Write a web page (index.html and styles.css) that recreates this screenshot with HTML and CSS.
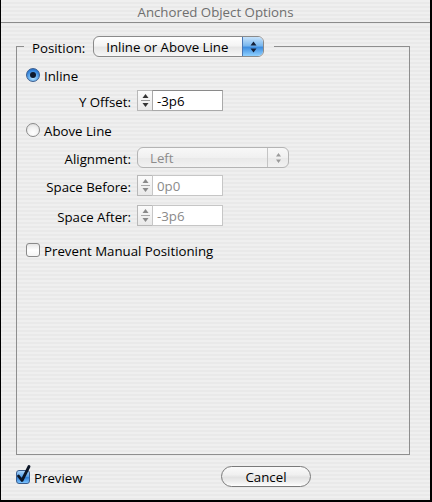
FILE: index.html
```html
<!DOCTYPE html>
<html>
<head>
<meta charset="utf-8">
<title>Anchored Object Options</title>
<link rel="stylesheet" href="styles.css">
</head>
<body>
<div class="window">
  <div class="titlebar">Anchored Object Options</div>
  <div class="content">
    <fieldset class="group">
      <legend class="group-legend">
        <span class="legend-label txt">Position:</span>
        <span class="popup popup-active">
          <span class="popup-text">Inline or Above Line</span>
          <span class="popup-arrows">
            <svg width="7" height="12" viewBox="0 0 7 12"><path d="M3.5 0.5 L6.5 4.5 H0.5Z M0.5 7.5 H6.5 L3.5 11.5Z" fill="#142038"/></svg>
          </span>
        </span>
      </legend>

      <div class="row row-inline">
        <span class="radio radio-on"><span class="radio-dot"></span></span>
        <span class="txt">Inline</span>
      </div>

      <div class="field-row row-yoffset">
        <span class="field-label txt">Y Offset:</span>
        <span class="stepper">
          <svg width="13" height="19" viewBox="0 0 13 19"><path d="M6.5 3 L9.5 7 H3.5Z" fill="#333"/><path d="M2 9.5 H11" stroke="#999" stroke-width="1"/><path d="M3.5 12 H9.5 L6.5 16Z" fill="#333"/></svg>
        </span>
        <span class="input">-3p6</span>
      </div>

      <div class="row row-above">
        <span class="radio radio-off"></span>
        <span class="txt">Above Line</span>
      </div>

      <div class="field-row row-align">
        <span class="field-label txt">Alignment:</span>
        <span class="popup popup-disabled">
          <span class="popup-text">Left</span>
          <span class="popup-arrows-dis">
            <svg width="7" height="12" viewBox="0 0 7 12"><path d="M3.5 1 L6 4.5 H1Z M1 7.5 H6 L3.5 11Z" fill="#9a9a9a"/></svg>
          </span>
        </span>
      </div>

      <div class="field-row row-before">
        <span class="field-label txt">Space Before:</span>
        <span class="stepper stepper-dis">
          <svg width="13" height="19" viewBox="0 0 13 19"><path d="M6.5 3 L9.5 7 H3.5Z" fill="#8a8a8a"/><path d="M2 9.5 H11" stroke="#aaa" stroke-width="1"/><path d="M3.5 12 H9.5 L6.5 16Z" fill="#8a8a8a"/></svg>
        </span>
        <span class="input input-dis">0p0</span>
      </div>

      <div class="field-row row-after">
        <span class="field-label txt">Space After:</span>
        <span class="stepper stepper-dis">
          <svg width="13" height="19" viewBox="0 0 13 19"><path d="M6.5 3 L9.5 7 H3.5Z" fill="#8a8a8a"/><path d="M2 9.5 H11" stroke="#aaa" stroke-width="1"/><path d="M3.5 12 H9.5 L6.5 16Z" fill="#8a8a8a"/></svg>
        </span>
        <span class="input input-dis">-3p6</span>
      </div>

      <div class="row row-prevent">
        <span class="checkbox"></span>
        <span class="txt">Prevent Manual Positioning</span>
      </div>
    </fieldset>

    <div class="footer">
      <div class="preview">
        <span class="checkbox checkbox-on">
          <svg class="check" width="15" height="19" viewBox="0 0 15 19"><path d="M2.5 11 L6 15.5 L13 1.5" fill="none" stroke="#0b1526" stroke-width="2.8" stroke-linecap="round" stroke-linejoin="round"/></svg>
        </span>
        <span class="txt">Preview</span>
      </div>
      <span class="button">Cancel</span>
    </div>
  </div>
</div>
</body>
</html>
```

FILE: styles.css
```css
html, body {
  margin: 0;
  padding: 0;
}

body {
  font-family: "Open Sans", "Noto Sans", sans-serif;
  font-size: 13.25px;
  color: #000;
  background: #000;
}

.window {
  width: 432px;
  height: 502px;
  box-sizing: border-box;
  border-left: 1px solid #000;
  border-right: 2px solid #000;
  border-bottom: 2px solid #000;
  background: repeating-linear-gradient(to bottom, #efefef 0, #efefef 2px, #e9e9e9 2px, #e9e9e9 4px);
  display: flex;
  flex-direction: column;
}

.titlebar {
  flex: none;
  height: 22px;
  line-height: 24px;
  text-align: center;
  color: #6e6e6e;
  border-bottom: 1px solid #8c8c8c;
}

.content {
  flex: 1;
  min-height: 0;
  display: flex;
  flex-direction: column;
  padding: 13px 20px 0 15px;
}

.group {
  flex: 1;
  min-width: 0;
  min-height: 0;
  margin: 0;
  padding: 10px 9px 0 9px;
  border: 1px solid #8e8e8e;
}

.group-legend {
  display: flex;
  align-items: center;
  height: 21px;
  margin-left: -2px;
  padding: 0 10px 0 8px;
}

.txt {
  padding-top: 2px;
}

.legend-label {
  margin-right: 8px;
  line-height: 16px;
}

/* popup menus */
.popup {
  display: flex;
  align-items: stretch;
  box-sizing: border-box;
  height: 21px;
  border-radius: 6px;
  overflow: hidden;
}

.popup-active {
  width: 171px;
  border: 1px solid #8a8a8a;
  background: linear-gradient(to bottom, #ffffff 0, #f4f4f4 45%, #e6e6e6 55%, #f7f7f7 100%);
}

.popup-text {
  flex: 1;
  line-height: 19px;
  padding: 1px 0 0 12px;
  white-space: nowrap;
}

.popup-arrows {
  width: 20px;
  display: flex;
  align-items: center;
  justify-content: center;
  border-left: 1px solid #4a77b4;
  background: linear-gradient(to bottom, #c6e2fb 0, #7bb8ee 45%, #3f8ee0 55%, #8ed0ff 100%);
}

.popup-disabled {
  width: 152px;
  border: 1px solid #b4b4b4;
  background: linear-gradient(to bottom, #f8f8f8 0, #f0f0f0 50%, #e8e8e8 51%, #f2f2f2 100%);
  color: #8c8c8c;
}

.popup-arrows-dis {
  width: 20px;
  display: flex;
  align-items: center;
  justify-content: center;
  border-left: 1px solid #c4c4c4;
}

/* rows */
.row {
  display: flex;
  align-items: center;
  height: 16px;
  line-height: 16px;
}

.field-row {
  display: flex;
  align-items: center;
  height: 21px;
  line-height: 16px;
}

.field-label {
  width: 105px;
  margin-right: 6px;
  text-align: right;
  white-space: nowrap;
}

.row-inline { margin-top: 0; }
.row-yoffset { margin-top: 7px; }
.row-above { margin-top: 11px; }
.row-align { margin-top: 9px; }
.row-before { margin-top: 7px; }
.row-after { margin-top: 9px; }
.row-prevent { margin-top: 16px; }

/* radios */
.radio {
  width: 14px;
  height: 14px;
  box-sizing: border-box;
  border-radius: 50%;
  margin-right: 4px;
  display: flex;
  align-items: center;
  justify-content: center;
  flex: none;
}

.radio-on {
  border: 1px solid #3b5e8f;
  background: radial-gradient(circle at 50% 75%, #b4e0ff 0, #6fb4f0 35%, #2f7fd8 70%, #1f5fb0 100%);
}

.radio-dot {
  width: 6px;
  height: 6px;
  border-radius: 50%;
  background: #0e1a2e;
}

.radio-off {
  border: 1px solid #8a8a8a;
  background: radial-gradient(circle at 50% 75%, #ffffff 0, #f2f2f2 50%, #d8d8d8 100%);
}

/* checkboxes */
.checkbox {
  position: relative;
  width: 14px;
  height: 14px;
  box-sizing: border-box;
  border-radius: 3px;
  border: 1px solid #8a8a8a;
  background: linear-gradient(to bottom, #e6e6e6 0, #ffffff 50%, #f4f4f4 100%);
  margin-right: 4px;
  flex: none;
}

.checkbox-on {
  border: 1px solid #3b5e8f;
  background: linear-gradient(to bottom, #a9d4fa 0, #5aa3ea 45%, #2f7fd8 55%, #7cc4ff 100%);
}

.check {
  position: absolute;
  left: -1px;
  top: -6px;
}

/* steppers and inputs */
.stepper {
  box-sizing: border-box;
  width: 15px;
  height: 21px;
  border: 1px solid #b8b8b8;
  border-right: none;
  background: linear-gradient(to bottom, #fbfbfb, #e9e9e9);
  display: flex;
  align-items: center;
  justify-content: center;
}

.input {
  box-sizing: border-box;
  width: 71px;
  height: 21px;
  padding: 1px 0 0 4px;
  line-height: 18px;
  background: #fff;
  border: 1px solid #a9a9a9;
  border-top-color: #8a8a8a;
  white-space: nowrap;
}

.input-dis {
  color: #8a8a8a;
  border-color: #c6c6c6;
}

/* footer */
.footer {
  flex: none;
  height: 45px;
  box-sizing: border-box;
  padding: 11px 0 13px 0;
  display: flex;
  align-items: center;
}

.preview {
  display: flex;
  align-items: center;
  line-height: 16px;
}

.button {
  margin-left: auto;
  margin-right: 99px;
  box-sizing: border-box;
  width: 90px;
  height: 21px;
  padding-top: 1px;
  line-height: 18px;
  text-align: center;
  border: 1px solid #7a7a7a;
  border-radius: 11px;
  background: linear-gradient(to bottom, #fafafa 0, #f0f0f0 40%, #e2e2e2 55%, #f2f2f2 85%, #ffffff 100%);
}
```
